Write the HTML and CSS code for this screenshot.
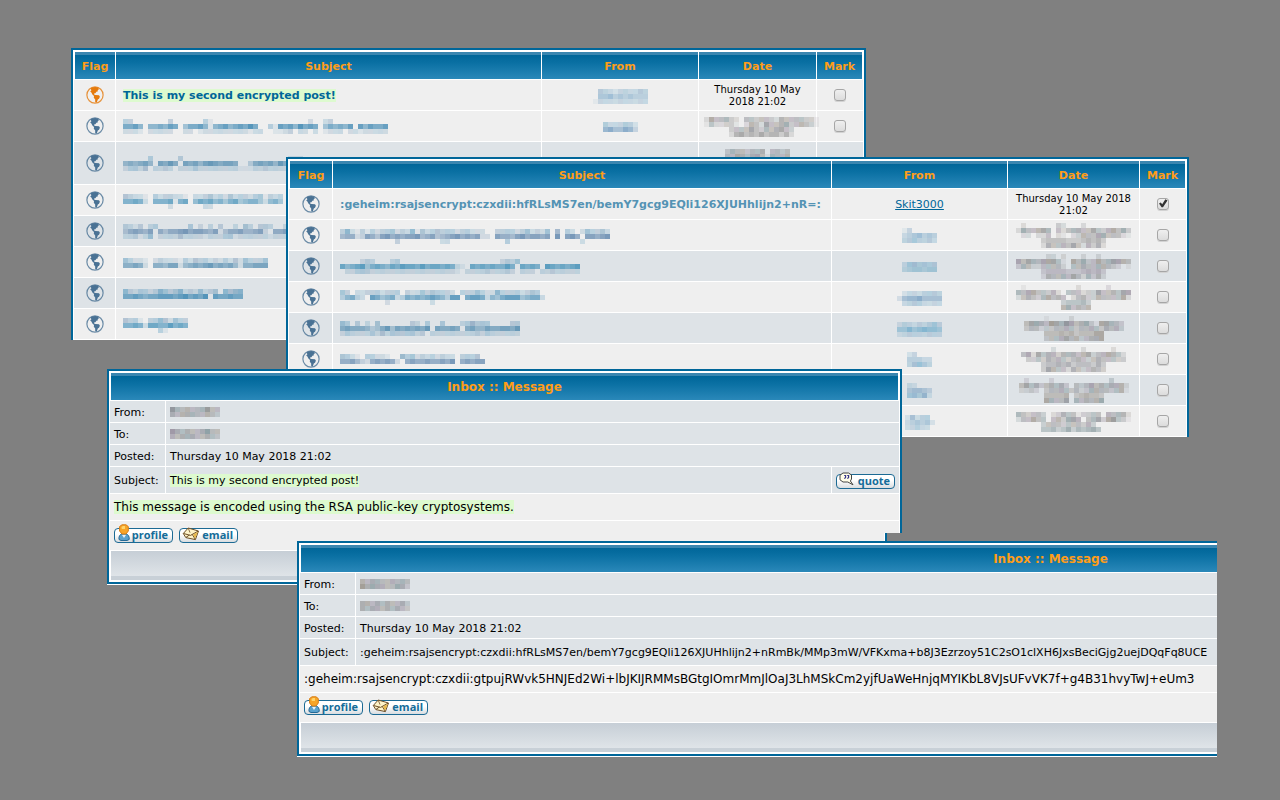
FILE: index.html
```html
<!DOCTYPE html>
<html lang="en">
<head>
<meta charset="utf-8">
<title>Inbox</title>
<link rel="stylesheet" href="styles.css">
</head>
<body>
<svg class="defs" aria-hidden="true">
  <symbol id="globe" viewBox="0 0 18 18">
    <circle cx="9" cy="9" r="8.1" fill="none" stroke="currentColor" stroke-width="1.2" opacity=".8"/>
    <path fill="currentColor" d="M4.5 2.6 6.6 1.3 9.5 1 12.4 1.6 12.8 3.4 11.6 4.2 12 5.2 10.4 5.8 9.4 7.2 8 7.4 8.4 8.8 9.6 9 13 9.2 13.9 10.7 13 12.8 11.8 13.6 10.8 16.6 9.2 16.2 9.2 13.4 7.8 11.8 8 10 6.4 8.6 5.4 6.4 4.2 5.4 5.4 4.2Z"/>
  </symbol>
  <symbol id="person" viewBox="0 0 14 18">
    <path d="M2 15.5C1.5 12.5 3 10.5 5 9.5H9C11 10.5 12.6 12.5 12.2 15.5L10 16.5H4Z" fill="#5aa2cd" stroke="#256894"/>
    <path d="M5 11 7 14 9 11Z" fill="#e6f2fa"/>
    <path d="M2.6 2.5 5 .8H9L11.3 2.6V7L9 10H5L2.6 7Z" fill="#f7a528" stroke="#d77c14"/>
    <path d="M4.5 3 6 2H8V5H4.8Z" fill="#ffd46b"/>
  </symbol>
  <symbol id="letter" viewBox="0 0 18 15">
    <path d="M1.3 6.5 6.2 1 16.5 4 13.4 12.6 3.8 10.6Z" fill="#fff4c9" stroke="#6c4e27"/>
    <path d="M1.5 6.5 8.5 8.4 16 4.2M4 10.4 7.4 8M13.2 12.2 10.4 7.6" fill="none" stroke="#6c4e27"/>
    <path d="M11 7.8 15.8 4.8 13.2 11.6Z" fill="#e7b94b"/>
    <path d="M6.2 1 8 5.6" stroke="#6c4e27" stroke-width=".8"/>
  </symbol>
  <symbol id="bubble" viewBox="0 0 16 14">
    <path d="M4 1H9.5L12.5 3V7L11.4 9 14 12.8 8.8 10H4L1 7.8V3.2Z" fill="#fffde8" stroke="#444"/>
    <path d="M5.2 3.5H6.6V5.4L5.4 6.7M8.2 3.5H9.6V5.4L8.4 6.7" fill="none" stroke="#35358a" stroke-width="1.2"/>
  </symbol>
</svg>
<main class="desktop">

<section class="window list-a">
<table class="forum">
<colgroup><col class="c-flag"><col><col class="c-from"><col class="c-date"><col class="c-mark"></colgroup>
<thead><tr><th>Flag</th><th>Subject</th><th>From</th><th>Date</th><th>Mark</th></tr></thead>
<tbody>
<tr><td><svg class="globe new"><use href="#globe"/></svg></td><td class="subject"><a class="decoded" href="#m1">This is my second encrypted post!</a></td><td><i class="mosaic low" data-tone="soft" data-rows="04432343344|05564545444|13333333333"></i></td><td class="date">Thursday 10 May 2018 21:02</td><td><input type="checkbox" aria-label="Mark message 1"></td></tr>
<tr><td><svg class="globe"><use href="#globe"/></svg></td><td class="subject"><i class="mosaic" data-rows="33000000030000003100000000000000000002002300000000000|66750556576046675156756768600317675867604656570757667|22210222220022012222222221220011230220201222022122222"></i></td><td><i class="mosaic low" data-tone="soft" data-rows="5333542|6755763"></i></td><td class="date"><i class="mosaic" data-tone="grey" data-rows="26445320443443254444331|14223310254264456345431|00000344464354564300000|00000256454645535200000"></i></td><td><input type="checkbox" aria-label="Mark message 2"></td></tr>
<tr class="alt tall"><td><svg class="globe"><use href="#globe"/></svg></td><td class="subject"><i class="mosaic" data-rows="000003000003000000000000000000000222000|565675076860767578767760036767586766076|233240223202223222222221112232222223022"></i></td><td></td><td class="date"><i class="mosaic" data-tone="grey" data-rows="3544344504434|4465456415445|0435465434310|0345434543100|0000000000000|0034454640000"></i></td><td><input type="checkbox" aria-label="Mark message 3"></td></tr>
<tr><td><svg class="globe"><use href="#globe"/></svg></td><td class="subject"><i class="mosaic low" data-rows="4322103233221022342324233234132302|6676206667167057675646745664256403|0000000002000000220000000000000000"></i></td><td></td><td></td><td></td></tr>
<tr class="alt"><td><svg class="globe"><use href="#globe"/></svg></td><td class="subject"><i class="mosaic" data-rows="321302300000030202030020420332002323|467657064667867765714667556720667676|223124022224222212223312222221222222"></i></td><td></td><td></td><td></td></tr>
<tr><td><svg class="globe"><use href="#globe"/></svg></td><td class="subject"><i class="mosaic low" data-rows="43221023222132433232324243334|66762066577256767867675266777"></i></td><td></td><td></td><td></td></tr>
<tr class="alt"><td><svg class="globe"><use href="#globe"/></svg></td><td class="subject"><i class="mosaic low" data-rows="532332354345232423405455|667656677767867680766766"></i></td><td></td><td></td><td></td></tr>
<tr><td><svg class="globe"><use href="#globe"/></svg></td><td class="subject"><i class="mosaic low" data-rows="4331033542433|6676277668676|0000000310000"></i></td><td></td><td></td><td></td></tr>
</tbody>
</table>
</section>

<section class="window list-b">
<table class="forum">
<colgroup><col class="c-flag"><col><col class="c-from"><col class="c-date"><col class="c-mark"></colgroup>
<thead><tr><th>Flag</th><th>Subject</th><th>From</th><th>Date</th><th>Mark</th></tr></thead>
<tbody>
<tr><td><svg class="globe"><use href="#globe"/></svg></td><td class="subject"><a class="visited" href="#m2">:geheim:rsajsencrypt:czxdii:hfRLsMS7en/bemY7gcg9EQli126XJUHhlijn2+nR=:</a></td><td><a class="user" href="#skit3000">Skit3000</a></td><td class="date">Thursday 10 May 2018 21:02</td><td><input type="checkbox" checked aria-label="Mark message 1"></td></tr>
<tr><td><svg class="globe"><use href="#globe"/></svg></td><td class="subject"><i class="mosaic low" data-rows="352131323342325142343332332220033332342324050320243342|566237647867677856745678676722076657867767080786077678|000000000003000000002200000000000300000000000000200000"></i></td><td><i class="mosaic" data-tone="soft" data-rows="1300000|3456454|4454443"></i></td><td class="date"><i class="mosaic" data-tone="grey" data-rows="02000000320002000000000|26445650424554464356463|02202240210235446644421|00000344443334545300000|00000254454642535200000"></i></td><td><input type="checkbox" aria-label="Mark message 2"></td></tr>
<tr class="alt"><td><svg class="globe"><use href="#globe"/></svg></td><td class="subject"><i class="mosaic" data-rows="000023200023000000000000000000002324000000000000|756784676576877686776762107676766860767608767678|022333222222222222222221022223222320222022322222"></i></td><td><i class="mosaic low" data-tone="soft" data-rows="3555544|4566566"></i></td><td class="date"><i class="mosaic" data-tone="grey" data-rows="00000022020002002000000|64654666410646346456654|35422444420445445543201|00000344443334545300000|00000254454642535200000"></i></td><td><input type="checkbox" aria-label="Mark message 3"></td></tr>
<tr><td><svg class="globe"><use href="#globe"/></svg></td><td class="subject"><i class="mosaic" data-rows="43022333233303224343332033343225333323430|35632076456236565676537706776254677745662|00000000020000000020000000000000000000000"></i></td><td><i class="mosaic low" data-tone="soft" data-rows="023334444|256675555|034443333"></i></td><td class="date"><i class="mosaic" data-tone="grey" data-rows="01000000000020000020000|54664435204442336445466|24543564540245335444462|00000000034445300000000|00000000056454500000000"></i></td><td><input type="checkbox" aria-label="Mark message 4"></td></tr>
<tr class="alt"><td><svg class="globe"><use href="#globe"/></svg></td><td class="subject"><i class="mosaic" data-rows="430302040000003203003000235333000033|676665346847676768076676067557667768|232222324233333230222222222323222222"></i></td><td><i class="mosaic low" data-tone="soft" data-rows="243233453|557567665|233333333"></i></td><td class="date"><i class="mosaic" data-tone="grey" data-rows="00001000020000000000|46654765764563166543|34423344543445435453|00004445453444660000|00003445645345560000"></i></td><td><input type="checkbox" aria-label="Mark message 5"></td></tr>
<tr><td><svg class="globe"><use href="#globe"/></svg></td><td class="subject"><i class="mosaic" data-rows="43210332210053423232322033340|66753267676206766766768067677"></i></td><td><i class="mosaic" data-tone="soft" data-rows="23000|44433|45654"></i></td><td class="date"><i class="mosaic" data-tone="grey" data-rows="000000200000200000200|462645535554563456542|033435454345434544433|000034454534443530000|000036544254345430000"></i></td><td><input type="checkbox" aria-label="Mark message 6"></td></tr>
<tr class="alt"><td><svg class="globe"><use href="#globe"/></svg></td><td class="subject"></td><td><i class="mosaic" data-tone="soft" data-rows="32000|45543|56562"></i></td><td class="date"><i class="mosaic" data-tone="grey" data-rows="0200002000000000003000|4645345453043464545552|2232034454342355443451|0000044445034544300000|0000065446054545600000"></i></td><td><input type="checkbox" aria-label="Mark message 7"></td></tr>
<tr><td><svg class="globe"><use href="#globe"/></svg></td><td class="subject"></td><td><i class="mosaic low" data-tone="soft" data-rows="253440|345452|334330"></i></td><td class="date"><i class="mosaic" data-tone="grey" data-rows="54344302354413344054552|24464404536650456367431|00000344434443530000000|00000445346354564000000"></i></td><td><input type="checkbox" aria-label="Mark message 8"></td></tr>
</tbody>
</table>
</section>

<section class="window message-a">
<table class="forum message">
<colgroup><col class="c-label"><col><col class="c-quote"></colgroup>
<thead><tr><th colspan="3">Inbox :: Message</th></tr></thead>
<tbody>
<tr><td>From:</td><td colspan="2"><i class="mosaic" data-tone="grey" data-rows="7545445744|5455544543"></i></td></tr>
<tr><td>To:</td><td colspan="2"><i class="mosaic" data-tone="grey" data-rows="7545445744|5455544543"></i></td></tr>
<tr><td>Posted:</td><td colspan="2">Thursday 10 May 2018 21:02</td></tr>
<tr class="roomy"><td>Subject:</td><td><span class="decoded">This is my second encrypted post!</span></td><td><button class="tool" type="button"><svg class="bubble"><use href="#bubble"/></svg>quote</button></td></tr>
<tr class="body"><td colspan="3"><span class="decoded">This message is encoded using the RSA public-key cryptosystems.</span></td></tr>
<tr class="actions"><td colspan="3"><div class="tools"><button class="tool" type="button"><svg class="person"><use href="#person"/></svg>profile</button><button class="tool" type="button"><svg class="letter"><use href="#letter"/></svg>email</button></div></td></tr>
<tr class="foot"><td colspan="3"></td></tr>
</tbody>
</table>
</section>

<section class="window message-b">
<table class="forum message">
<colgroup><col class="c-label"><col></colgroup>
<thead><tr><th colspan="2">Inbox :: Message</th></tr></thead>
<tbody>
<tr><td>From:</td><td><i class="mosaic" data-tone="grey" data-rows="5455445454|7565544653"></i></td></tr>
<tr><td>To:</td><td><i class="mosaic" data-tone="grey" data-rows="5545454453|5455454543"></i></td></tr>
<tr><td>Posted:</td><td>Thursday 10 May 2018 21:02</td></tr>
<tr class="roomy"><td>Subject:</td><td>:geheim:rsajsencrypt:czxdii:hfRLsMS7en/bemY7gcg9EQli126XJUHhlijn2+nRmBk/MMp3mW/VFKxma+b8J3Ezrzoy51C2sO1clXH6JxsBeciGjg2uejDQqFq8UCE</td></tr>
<tr class="body"><td colspan="2">:geheim:rsajsencrypt:czxdii:gtpujRWvk5HNJEd2Wi+lbJKIJRMMsBGtgIOmrMmJlOaJ3LhMSkCm2yjfUaWeHnjqMYIKbL8VJsUFvVK7f+g4B31hvyTwJ+eUm3</td></tr>
<tr class="actions"><td colspan="2"><div class="tools"><button class="tool" type="button"><svg class="person"><use href="#person"/></svg>profile</button><button class="tool" type="button"><svg class="letter"><use href="#letter"/></svg>email</button></div></td></tr>
<tr class="foot"><td colspan="2"></td></tr>
</tbody>
</table>
</section>

</main>
<script src="mosaic.js"></script>
</body>
</html>
```

FILE: styles.css
```css
* { box-sizing: border-box; }

body {
  margin: 0;
  background: #808080;
  color: #000;
  font: 11px/13px Verdana, "DejaVu Sans", sans-serif;
}

.defs { position: absolute; width: 0; height: 0; }

.desktop {
  position: relative;
  min-height: 100vh;
  overflow: hidden;
}

/* Windows on the desktop */
.window { position: absolute; overflow: hidden; }
.list-a { left: 71px; top: 48px; width: 795px; }
.list-b { left: 286px; top: 157px; width: 903px; }
.message-a { left: 107px; top: 369px; width: 795px; padding-bottom: 1px; }
.message-b { left: 297px; top: 541px; width: 920px; padding-bottom: 1px; }
.message-b .forum { width: 1507px; }

/* Step in the right edge of the first message window */
.message-a::after {
  content: "";
  position: absolute;
  right: 0;
  top: 164px;
  bottom: 0;
  width: 15px;
  background: #808080;
  box-shadow: -2px 0 0 #006699, -3px 0 0 #fff;
}

.forum {
  width: 100%;
  table-layout: fixed;
  border: 2px solid #006699;
  border-collapse: separate;
  border-spacing: 1px;
  background: #fff;
}
.list-a .forum, .list-b .forum { border-bottom: 0; }
.message { box-shadow: 0 1px 0 #fff; }

.c-flag { width: 41px; }
.c-from { width: 156px; }
.c-date { width: 117px; }
.c-mark { width: 46px; }
.list-b .c-flag { width: 43px; }
.list-b .c-from { width: 175px; }
.list-b .c-date { width: 131px; }
.c-label { width: 55px; }
.c-quote { width: 67px; }

th {
  height: 28px;
  padding: 1px 0 0;
  border-top: 1px solid #fff;
  background: linear-gradient(#3a86b0 3px, #006699 3px, #0a70a3 40%, #2a88b9) padding-box;
  color: #ff9d18;
  font-weight: bold;
}
th:first-child { border-left: 1px solid #fff; }
th:last-child { border-right: 1px solid #fff; }

td {
  height: 30px;
  padding: 0;
  background: #efefef;
  text-align: center;
  white-space: nowrap;
}
.alt td { background: #dee3e7; }
.tall td { height: 42px; }
td.subject { padding-left: 7px; text-align: left; font-weight: bold; }
td.date { padding: 1px 5px 0; font-size: 10px; line-height: 12px; white-space: normal; }

a { color: #006699; text-decoration: none; }
.visited { color: #5493b4; }
.user { text-decoration: underline; }
.decoded { background: #ddfacf; }

.globe { display: block; width: 18px; height: 18px; margin: 0 auto; color: #4a7294; }
.new { color: #e57a0c; }

.mosaic { display: block; width: fit-content; margin: 0 auto; }
.mosaic svg { display: block; }
.subject .mosaic, .message .mosaic { margin: 0; }
.low { padding-top: 2px; }

input[type="checkbox"] {
  appearance: none;
  display: block;
  width: 12px;
  height: 12px;
  margin: 0 auto 1px;
  border: 1px solid #a6a6a6;
  border-radius: 3px;
  background: linear-gradient(#efefef, #dcdcdc);
  box-shadow: 0 1px 0 #d2d2d2;
}
input[type="checkbox"]:checked::after {
  content: "";
  display: block;
  width: 10px;
  height: 10px;
  background: #333;
  clip-path: polygon(10% 50%, 28% 40%, 42% 58%, 74% 8%, 95% 20%, 50% 88%, 36% 88%);
}

/* Message view */
.message th { font-size: 12px; }
.message td { height: 21px; padding: 1px 4px 0; background: #dee3e7; text-align: left; }
.message .roomy td { height: 26px; padding-top: 0; }
.message .body td { height: 26px; padding-top: 0; background: #efefef; font-size: 12px; line-height: 15px; }
.message .actions td { height: 29px; padding: 0 4px 2px; background: #efefef; }
.message .foot td {
  height: 30px;
  border: 1px solid #fff;
  border-top: 0;
  background: linear-gradient(#c6ced6, #dfe4e8 25px, #c8d0d7 25px) padding-box;
}

.tools { display: flex; gap: 6px; }
.tool {
  position: relative;
  display: block;
  width: 59px;
  height: 15px;
  margin: 2px 0 0;
  padding: 0 4px 2px 0;
  border: 1px solid #1c6a94;
  border-radius: 4px;
  background: linear-gradient(#fff 40%, #d9dde0);
  color: #146c99;
  font: bold 11px/11px "Open Sans", sans-serif;
  text-align: right;
}
.tool svg { position: absolute; left: 2px; bottom: 0; }
.tool .person { width: 14px; height: 18px; }
.tool .letter { width: 18px; height: 15px; }
.tool .bubble { width: 16px; height: 14px; bottom: 2px; }
```

FILE: mosaic.js
```js
// Draws each redacted text as a grid of 5px tiles; a digit is a tile's strength.
const TILE = 5;
const TONES = {
  link: ["#2f7fae", "#4a86ac", "#5b83ab", "#3b8bb5"],
  soft: ["#5fa3c6", "#6b9fc4", "#74abc6", "#6292ba"],
  grey: ["#73767f", "#8b8176", "#6f868b", "#86798c", "#7c7c7c"]
};
const NS = "http://www.w3.org/2000/svg";

document.querySelectorAll(".mosaic").forEach((el, n) => {
  const rows = el.dataset.rows.split("|");
  const palette = TONES[el.dataset.tone || "link"];
  const svg = document.createElementNS(NS, "svg");
  svg.setAttribute("width", rows[0].length * TILE);
  svg.setAttribute("height", rows.length * TILE);
  svg.setAttribute("shape-rendering", "crispEdges");
  svg.setAttribute("aria-hidden", "true");
  rows.forEach((row, y) => [...row].forEach((digit, x) => {
    if (digit === "0") return;
    const rect = document.createElementNS(NS, "rect");
    rect.setAttribute("x", x * TILE);
    rect.setAttribute("y", y * TILE);
    rect.setAttribute("width", TILE);
    rect.setAttribute("height", TILE);
    rect.setAttribute("fill", palette[(x * 7 + y * 5 + n * 3 + x * y) % palette.length]);
    rect.setAttribute("fill-opacity", digit / 10);
    svg.appendChild(rect);
  }));
  el.appendChild(svg);
});
```
